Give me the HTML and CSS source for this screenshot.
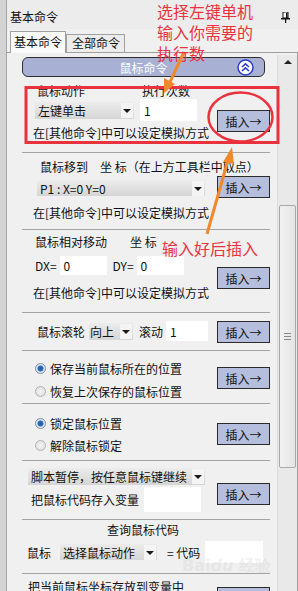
FILE: index.html
```html
<!DOCTYPE html>
<html lang="zh">
<head>
    <meta charset="UTF-8">
    <title>基本命令</title>
    <link rel="stylesheet" href="styles.css">
</head>
<body>

<div class="frame">
    <div class="titlebar">
        <span>基本命令</span>
        <svg class="pin" width="9" height="11" viewBox="0 0 9 11">
            <rect x="2" y="0" width="5" height="6" fill="#fff" stroke="#111" stroke-width="1"/>
            <rect x="5" y="1" width="1.5" height="5" fill="#111"/>
            <rect x="0" y="6" width="9" height="1.5" fill="#111"/>
            <rect x="4" y="7" width="1.2" height="4" fill="#111"/>
        </svg>
    </div>

    <div class="tabs">
        <div class="tab active">基本命令</div>
        <div class="tab">全部命令</div>
    </div>

    <div class="panel">
        <div class="content">
            <div class="group-head">
                <span>鼠标命令</span>
                <svg class="fold" width="17" height="17" viewBox="0 0 17 17">
                    <circle cx="8.5" cy="8.5" r="7.5" fill="#fff" stroke="#2b3fc4" stroke-width="1.5"/>
                    <path d="M5 8 L8.5 4.8 L12 8 M5 12 L8.5 8.8 L12 12" fill="none" stroke="#2b3fc4" stroke-width="1.6"/>
                </svg>
            </div>

            <!-- 鼠标动作 -->
            <div class="sec s1">
                <div class="main">
                    <div class="pair">
                        <span class="lbl">鼠标动作</span>
                        <span class="lbl">执行次数</span>
                        <div class="combo"><span>左键单击</span><i class="arr"></i></div>
                        <div class="field">1</div>
                    </div>
                    <div class="note">在[其他命令]中可以设定模拟方式</div>
                </div>
                <div class="side"><button class="ins">插入→</button></div>
            </div>

            <!-- 鼠标移到 -->
            <div class="sec s2">
                <div class="main">
                    <div class="title"><span class="t1">鼠标移到</span><span>坐 标（在上方工具栏中取点）</span></div>
                    <div class="combo wide"><span>P1 : X=0 Y=0</span><i class="arr"></i></div>
                    <div class="note">在[其他命令]中可以设定模拟方式</div>
                </div>
                <div class="side"><button class="ins">插入→</button></div>
            </div>

            <!-- 鼠标相对移动 -->
            <div class="sec s3">
                <div class="main">
                    <div class="title"><span class="t1">鼠标相对移动</span><span>坐 标</span></div>
                    <div class="delta">
                        <span>DX=</span><div class="field small">0</div>
                        <span>DY=</span><div class="field small">0</div>
                    </div>
                    <div class="note">在[其他命令]中可以设定模拟方式</div>
                </div>
                <div class="side"><button class="ins">插入→</button></div>
            </div>

            <!-- 鼠标滚轮 -->
            <div class="sec s4">
                <div class="main">
                    <div class="wheel">
                        <span>鼠标滚轮</span>
                        <div class="combo tiny"><span>向上</span><i class="arr"></i></div>
                        <span>滚动</span>
                        <div class="field tiny">1</div>
                    </div>
                </div>
                <div class="side"><button class="ins">插入→</button></div>
            </div>

            <!-- 保存位置 -->
            <div class="sec s5">
                <div class="main">
                    <div class="opt"><i class="radio on"></i>保存当前鼠标所在的位置</div>
                    <div class="opt"><i class="radio"></i>恢复上次保存的鼠标位置</div>
                </div>
                <div class="side"><button class="ins">插入→</button></div>
            </div>

            <!-- 锁定 -->
            <div class="sec s6">
                <div class="main">
                    <div class="opt"><i class="radio on"></i>锁定鼠标位置</div>
                    <div class="opt"><i class="radio"></i>解除鼠标锁定</div>
                </div>
                <div class="side"><button class="ins">插入→</button></div>
            </div>

            <!-- 暂停 / 存入变量 -->
            <div class="sec s7">
                <div class="main">
                    <div class="combo pause"><span>脚本暂停，按任意鼠标键继续</span><i class="arr"></i></div>
                    <div class="store"><span>把鼠标代码存入变量</span><div class="field var"></div></div>
                </div>
                <div class="side"><button class="ins">插入→</button></div>
            </div>

            <!-- 查询鼠标代码 -->
            <div class="sec s8">
                <div class="main">
                    <div class="query">查询鼠标代码</div>
                    <div class="code">
                        <span>鼠标</span>
                        <div class="combo pick"><span>选择鼠标动作</span><i class="arr"></i></div>
                        <span>= 代码</span>
                        <div class="field out"></div>
                    </div>
                </div>
                <div class="mark">Bai<b>du</b> 经验</div>
            </div>

            <div class="sec s9">
                <div class="main">
                    <div class="note">把当前鼠标坐标存放到变量中</div>
                </div>
                <div class="side"><button class="ins">插入→</button></div>
            </div>
        </div>

        <div class="scrollbar">
            <div class="sb-btn"><i class="up"></i></div>
            <div class="sb-track">
                <div class="sb-thumb"><i class="grip"></i></div>
            </div>
        </div>
    </div>
</div>

<!-- annotations drawn on top of the screenshot -->
<svg class="marks" width="298" height="591" viewBox="0 0 298 591">
    <rect x="26" y="87.5" width="252" height="55" fill="none" stroke="#e8333f" stroke-width="3"/>
    <ellipse cx="240.5" cy="117" rx="32" ry="24.5" fill="none" stroke="#e8333f" stroke-width="2.5"/>
    <path d="M184 52 L170 82" stroke="#f0892c" stroke-width="3" fill="none"/>
    <polygon points="164,93 164,78 175,84" fill="#f0892c"/>
    <path d="M207 234 L228 160" stroke="#f0892c" stroke-width="3" fill="none"/>
    <polygon points="232,147 223,162 234,164" fill="#f0892c"/>
</svg>
<div class="say say1">选择左键单机<br>输入你需要的<br>执行数</div>
<div class="say say2">输入好后插入</div>

</body>
</html>
```

FILE: styles.css
```css
* {
    box-sizing: border-box;
}
body {
    margin: 0;
    width: 298px;
    height: 591px;
    overflow: hidden;
    position: relative;
    background-color: #f0f0f0;
    font-family: "Noto Sans CJK SC", "Noto Sans", sans-serif;
    font-size: 12px;
    color: #111;
}
.frame {
    height: 591px;
    display: flex;
    flex-direction: column;
    border-left: 6px solid #d3d3d3;
}
.titlebar {
    flex-shrink: 0;
    height: 29px;
    padding: 8px 0 0 3px;
    line-height: 18px;
    display: flex;
    justify-content: space-between;
    border-left: 1px solid #a6a6a6;
    background-color: #ececec;
}
.pin {
    margin: 4px 8px 0 0;
}
.tabs {
    flex-shrink: 0;
    height: 23px;
    display: flex;
    align-items: flex-end;
    padding-left: 3px;
    border-left: 1px solid #a6a6a6;
}
.tab {
    height: 18px;
    line-height: 16px;
    padding: 0 4px 0 5px;
    white-space: nowrap;
    border: 1px solid #a0a0a0;
    border-bottom: none;
    background-color: #ececec;
}
.tab.active {
    height: 22px;
    line-height: 20px;
    padding: 0 3px;
    background-color: #fafafa;
    margin-bottom: -1px;
    position: relative;
}
.panel {
    flex: 1;
    min-height: 0;
    overflow: hidden;
    display: flex;
    border-top: 1px solid #a0a0a0;
    border-left: 1px solid #a6a6a6;
    border-right: 1px solid #a0a0a0;
    background-color: #f0f0f0;
}
.content {
    width: 270px;
    flex-shrink: 0;
    padding: 4px 0 0 15px;
}
.group-head {
    width: 243px;
    height: 20px;
    display: flex;
    align-items: center;
    justify-content: center;
    position: relative;
    color: #fff;
    background-color: #a8b1d4;
    border: 1px solid #2e2e2e;
    border-radius: 6px;
}
.fold {
    position: absolute;
    right: 10px;
    top: 1px;
}

/* sections */
.sec {
    width: 248px;
    display: flex;
    flex-shrink: 0;
    border-bottom: 1px solid #a3a3a3;
}
.main {
    flex: 1;
    min-width: 0;
}
.side {
    width: 53px;
    flex-shrink: 0;
}
.ins {
    width: 53px;
    height: 22px;
    padding: 0;
    font-family: inherit;
    font-size: 12px;
    color: #111;
    background-color: #b5bedc;
    border: 1px solid #2a2a2a;
    border-radius: 0;
}
.note {
    line-height: 18px;
    margin-left: 11px;
    white-space: nowrap;
}
.title {
    line-height: 18px;
    white-space: nowrap;
}
.combo {
    height: 17px;
    display: flex;
    align-items: center;
    padding-left: 3px;
    background: linear-gradient(#ececec, #d5d5d5);
    white-space: nowrap;
}
.combo .arr {
    margin-left: auto;
    width: 12px;
    height: 15px;
    margin-right: 1px;
    background-color: #f4f4f4;
    position: relative;
}
.combo .arr::after {
    content: "";
    position: absolute;
    left: 2px;
    top: 6px;
    border-top: 4px solid #1a1a1a;
    border-left: 4px solid transparent;
    border-right: 4px solid transparent;
}
.field {
    background-color: #fff;
    padding-left: 4px;
    display: flex;
    align-items: center;
}

.s1 {
    height: 76px;
    padding-top: 5px;
}
.pair {
    display: grid;
    grid-template-columns: 99px 57px;
    grid-template-rows: 17px 22px;
    column-gap: 6px;
    align-items: center;
    margin-left: 13px;
}
.pair .lbl {
    padding-left: 2px;
    line-height: 17px;
}
.pair .field {
    height: 22px;
}
.s1 .note {
    margin-top: 3px;
}
.s1 .side {
    padding-top: 28px;
}

.s2 {
    height: 77px;
    padding-top: 5px;
}
.s2 .title {
    margin-left: 18px;
}
.s2 .t1 {
    margin-right: 12px;
}
.combo.wide {
    width: 168px;
    height: 16px;
    margin: 4px 0 0 15px;
}
.s2 .note {
    margin-top: 8px;
}
.s2 .side {
    padding-top: 18px;
}

.s3 {
    height: 83px;
    padding-top: 3px;
}
.s3 .title {
    margin-left: 13px;
}
.s3 .t1 {
    margin-right: 23px;
}
.delta {
    display: flex;
    align-items: center;
    height: 19px;
    margin: 5px 0 0 13px;
}
.field.small {
    width: 47px;
    height: 19px;
    margin: 0 6px 0 3px;
}
.s3 .note {
    margin-top: 9px;
}
.s3 .side {
    padding-top: 34px;
}

.s4 {
    height: 38px;
    padding-top: 8px;
}
.wheel {
    display: flex;
    align-items: center;
    height: 20px;
    margin-left: 15px;
}
.combo.tiny {
    width: 44px;
    margin: 0 6px 0 4px;
    padding-left: 1px;
}
.field.tiny {
    width: 42px;
    height: 20px;
    margin-left: 3px;
}
.s4 .side {
    padding-top: 0;
}

.opt {
    display: flex;
    align-items: center;
    height: 18px;
    margin-left: 13px;
    white-space: nowrap;
}
.radio {
    width: 11px;
    height: 11px;
    margin-right: 4px;
    border-radius: 50%;
    border: 1px solid #b2b2b2;
    background: radial-gradient(circle, #f4f4f4 0, #dcdcdc 100%);
}
.radio.on {
    border-color: #7d8fa8;
    background: radial-gradient(circle, #1f5ca6 0, #2f6cb8 2.6px, #d8e4f2 3.4px, #eef3f9 100%);
}
.s5 {
    height: 53px;
    padding-top: 8px;
}
.s5 .opt + .opt {
    margin-top: 5px;
}
.s5 .side {
    padding-top: 8px;
}

.s6 {
    height: 57px;
    padding-top: 10px;
}
.s6 .opt + .opt {
    margin-top: 4px;
}
.s6 .side {
    padding-top: 9px;
}

.s7 {
    height: 59px;
    padding-top: 7px;
}
.combo.pause {
    width: 177px;
    margin-left: 6px;
}
.store {
    display: flex;
    align-items: center;
    height: 25px;
    margin: 2px 0 0 9px;
}
.field.var {
    width: 57px;
    height: 25px;
    margin-left: 5px;
}
.s7 .side {
    padding-top: 15px;
}

.s8 {
    height: 54px;
    padding-top: 1px;
    position: relative;
}
.query {
    line-height: 18px;
    margin-left: 85px;
}
.code {
    display: flex;
    align-items: center;
    height: 22px;
    margin: 2px 0 0 5px;
}
.combo.pick {
    width: 97px;
    height: 16px;
    margin: 0 10px 0 9px;
}
.field.out {
    width: 58px;
    height: 22px;
    margin-left: 5px;
}
.mark {
    position: absolute;
    left: 160px;
    top: 36px;
    font-family: "DejaVu Sans", sans-serif;
    font-size: 16px;
    font-weight: bold;
    color: rgba(205, 205, 205, 0.3);
    white-space: nowrap;
    pointer-events: none;
}
.mark b {
    font-style: italic;
}

.s9 {
    height: 40px;
    padding-top: 4px;
    border-bottom: none;
}
.s9 .note {
    margin-left: 6px;
}
.s9 .side {
    padding-top: 9px;
}

/* scrollbar */
.scrollbar {
    width: 20px;
    margin-top: 2px;
    display: flex;
    flex-direction: column;
    background-color: #e9e9e9;
    border-left: 1px solid #dcdcdc;
}
.sb-btn {
    height: 17px;
    position: relative;
}
.sb-btn .up {
    position: absolute;
    left: 6px;
    top: 5px;
    border-bottom: 4px solid #222;
    border-left: 4px solid transparent;
    border-right: 4px solid transparent;
}
.sb-track {
    flex: 1;
    padding: 133px 1px 0 1px;
}
.sb-thumb {
    height: 263px;
    border: 1px solid #a9a9a9;
    border-radius: 2px;
    background: linear-gradient(90deg, #f2f2f2, #e4e4e4);
    display: flex;
    align-items: center;
    justify-content: center;
}
.grip {
    width: 7px;
    height: 7px;
    border-top: 1px solid #8a8a8a;
    border-bottom: 1px solid #8a8a8a;
    position: relative;
}
.grip::after {
    content: "";
    position: absolute;
    left: 0;
    right: 0;
    top: 2px;
    border-top: 1px solid #8a8a8a;
}

/* annotations */
.marks {
    position: absolute;
    left: 0;
    top: 0;
    pointer-events: none;
}
.say {
    position: absolute;
    color: #e8333f;
    font-size: 16px;
    line-height: 21px;
    white-space: nowrap;
}
.say1 {
    left: 157px;
    top: 1px;
}
.say2 {
    left: 162px;
    top: 238px;
}
```
